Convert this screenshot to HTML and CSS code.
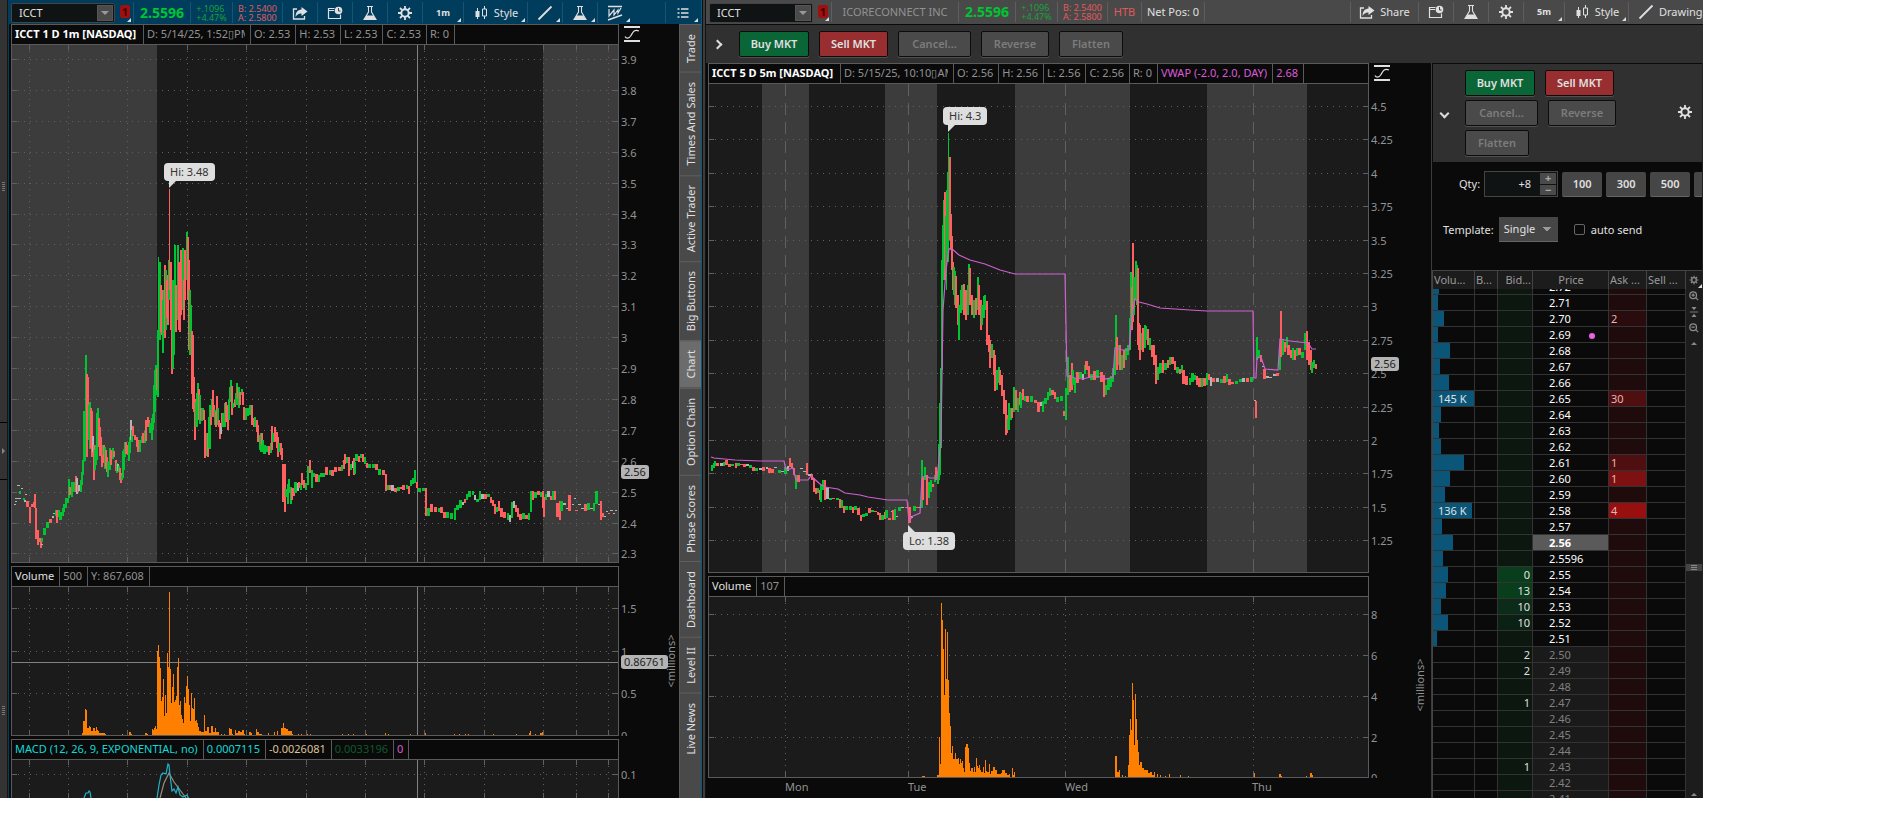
FILE: index.html
```html
<!DOCTYPE html>
<html lang="en">
<head>
  <meta charset="UTF-8">
  <meta name="viewport" content="width=device-width, initial-scale=1.0">
  <title>ICCT - Charts</title>
  <link rel="stylesheet" href="styles.css">
</head>
<body>
  <!-- Icon sprite -->
  <svg class="sprite" aria-hidden="true">
    <symbol id="i-share" viewBox="0 0 16 16"><path d="M5 4H1.5v10h11v-3" fill="none" stroke="currentColor" stroke-width="1.3"/><path d="M9.500 2l6 4.500-6 4.500V8.500C6.500 8.300 5 9.500 3.500 12 3.500 7.500 5.500 4.800 9.500 4.500z" fill="currentColor"/></symbol>
    <symbol id="i-clock" viewBox="0 0 16 16"><path d="M7 5.500H1.500M7.500 3.500h-6v10h12V9.500" fill="none" stroke="currentColor" stroke-width="1.2"/><circle cx="11.500" cy="5.500" r="3.800" fill="currentColor"/><path d="M11.500 3v3h2" fill="none" stroke="#345" stroke-width="1"/></symbol>
    <symbol id="i-flask" viewBox="0 0 16 16"><path d="M5 1.500h6M6.500 2v5L2 14.500h12L9.500 7V2" fill="none" stroke="currentColor" stroke-width="1.1"/><path d="M4.500 10.500h7l2.500 4.500H2z" fill="currentColor"/></symbol>
    <symbol id="i-gear" viewBox="0 0 16 16"><circle cx="8" cy="8" r="3.700" fill="none" stroke="currentColor" stroke-width="2"/><path d="M8 1v3M8 12v3M1 8h3M12 8h3M3 3l2.200 2.200M10.800 10.800L13 13M3 13l2.200-2.200M10.800 5.200L13 3" stroke="currentColor" stroke-width="1.800"/></symbol>
    <symbol id="i-candles" viewBox="0 0 16 16"><path d="M4.500 3v11M11.500 1v3M11.500 11v3" stroke="currentColor"/><path d="M2.500 6h4v6h-4z" fill="currentColor"/><path d="M9.500 4h4v7h-4z" fill="none" stroke="currentColor"/></symbol>
    <symbol id="i-line" viewBox="0 0 16 16"><path d="M1.500 14.500l13-13" stroke="currentColor" stroke-width="1.800"/></symbol>
    <symbol id="i-pattern" viewBox="0 0 16 16"><path d="M1 1.500h14M1 15l14-5" fill="none" stroke="currentColor" stroke-width="1.600"/><path d="M2 4v7l5-6v5l4-5v3l3-5" fill="none" stroke="currentColor" stroke-width="1.200"/></symbol>
    <symbol id="i-list" viewBox="0 0 16 16"><path d="M2.500 4h2M2.500 8h2M2.500 12h2M6 4h7.500M6 8h7.500M6 12h7.500" stroke="currentColor" stroke-width="1.400"/></symbol>
    <symbol id="i-fit" viewBox="0 0 16 16"><path d="M0 1h16M0 15h16" stroke="currentColor" stroke-width="2"/><path d="M1 10.500c1 2 4 2.500 6-1s3.500-6.500 8-4.500" fill="none" stroke="currentColor" stroke-width="1.200"/></symbol>
    <symbol id="i-zoomin" viewBox="0 0 12 12"><circle cx="5" cy="5" r="4" fill="none" stroke="currentColor" stroke-width="1.500"/><path d="M8 8l3 3M3 5h4M5 3v4" stroke="currentColor" stroke-width="1.500"/></symbol>
    <symbol id="i-zoomout" viewBox="0 0 12 12"><circle cx="5" cy="5" r="4" fill="none" stroke="currentColor" stroke-width="1.500"/><path d="M8 8l3 3M3 5h4" stroke="currentColor" stroke-width="1.500"/></symbol>
    <symbol id="i-center" viewBox="0 0 12 12"><path d="M1 6h10" stroke="currentColor"/><path d="M3 0h6L6 4zM3 12h6L6 8z" fill="currentColor"/></symbol>
  </svg>

  <main class="desktop">
    <aside class="rail">
      <span class="grip grip-top"></span>
      <span class="handle"></span>
      <span class="grip grip-bottom"></span>
    </aside>

    <!-- 1 minute chart -->
    <section class="window window-active">
      <div class="toolbar">
        <div class="symbol"><input type="text" value="ICCT" aria-label="Symbol"><button class="arrow" aria-label="Symbol list"></button></div>
        <button class="link-badge corner" aria-label="Link group"><span>1</span></button>
        <strong class="cell last">2.5596</strong>
        <span class="cell change">+.1096<br>+4.47%</span>
        <span class="cell quote">B: 2.5400<br>A: 2.5800</span>
        <button class="tool" aria-label="Share"><svg class="icon"><use href="#i-share"/></svg></button>
        <button class="tool" aria-label="Events"><svg class="icon"><use href="#i-clock"/></svg></button>
        <button class="tool" aria-label="Studies"><svg class="icon"><use href="#i-flask"/></svg></button>
        <button class="tool" aria-label="Settings"><svg class="icon"><use href="#i-gear"/></svg></button>
        <button class="tool tool-frame corner">1m</button>
        <button class="tool tool-style corner"><svg class="icon"><use href="#i-candles"/></svg>Style</button>
        <button class="tool corner" aria-label="Drawings"><svg class="icon"><use href="#i-line"/></svg></button>
        <button class="tool corner" aria-label="Edit studies"><svg class="icon"><use href="#i-flask"/></svg></button>
        <button class="tool tool-open corner" aria-label="Patterns"><svg class="icon"><use href="#i-pattern"/></svg></button>
        <span class="spacer spacer-line"></span>
        <button class="tool tool-open corner" aria-label="Menu"><svg class="icon"><use href="#i-list"/></svg></button>
      </div>
      <div class="window-body">
        <div class="charts charts-left">
          <div class="panel panel-price">
            <div class="frame">
              <div class="legend"><b>ICCT 1 D 1m [NASDAQ]</b><span class="date"><i>D: 5/14/25, 1:52▯PM</i></span><span>O: 2.53</span><span>H: 2.53</span><span>L: 2.53</span><span>C: 2.53</span><span>R: 0</span></div>
              <div class="plot" data-chart="leftPrice"></div>
            </div>
            <div class="axis"><svg class="icon fit"><use href="#i-fit"/></svg></div>
          </div>
          <div class="panel panel-volume">
            <div class="frame">
              <div class="legend"><span class="name">Volume</span><span>500</span><span>Y: 867,608</span></div>
              <div class="plot" data-chart="leftVolume"></div>
            </div>
            <div class="axis"><span class="units">&lt;millions&gt;</span></div>
          </div>
          <div class="panel panel-macd">
            <div class="frame">
              <div class="legend"><span class="cyan">MACD (12, 26, 9, EXPONENTIAL, no)</span><span class="cyan">0.0007115</span><span class="tan">-0.0026081</span><span class="forest">0.0033196</span><span class="violet">0</span></div>
              <div class="plot" data-chart="leftMacd"></div>
            </div>
            <div class="axis"></div>
          </div>
        </div>
        <nav class="tabs">
          <button>Trade</button>
          <button>Times And Sales</button>
          <button>Active Trader</button>
          <button>Big Buttons</button>
          <button class="active">Chart</button>
          <button>Option Chain</button>
          <button>Phase Scores</button>
          <button>Dashboard</button>
          <button>Level II</button>
          <button>Live News</button>
        </nav>
      </div>
    </section>

    <div class="splitter"></div>

    <!-- 5 minute chart -->
    <section class="window">
      <div class="toolbar">
        <div class="symbol"><input type="text" value="ICCT" aria-label="Symbol"><button class="arrow" aria-label="Symbol list"></button></div>
        <button class="link-badge corner" aria-label="Link group"><span>1</span></button>
        <span class="cell company">ICORECONNECT INC</span>
        <strong class="cell last">2.5596</strong>
        <span class="cell change">+.1096<br>+4.47%</span>
        <span class="cell quote">B: 2.5400<br>A: 2.5800</span>
        <span class="cell htb">HTB</span>
        <span class="cell netpos">Net Pos: 0</span>
        <span class="spacer spacer-line"></span>
        <button class="tool tool-share"><svg class="icon"><use href="#i-share"/></svg>Share</button>
        <button class="tool" aria-label="Events"><svg class="icon"><use href="#i-clock"/></svg></button>
        <button class="tool" aria-label="Studies"><svg class="icon"><use href="#i-flask"/></svg></button>
        <button class="tool" aria-label="Settings"><svg class="icon"><use href="#i-gear"/></svg></button>
        <button class="tool tool-frame corner">5m</button>
        <button class="tool tool-style corner"><svg class="icon"><use href="#i-candles"/></svg>Style</button>
        <button class="tool tool-drawings"><svg class="icon"><use href="#i-line"/></svg>Drawings</button>
      </div>
      <div class="orders">
        <button class="chevron chevron-right" aria-label="Expand"></button>
        <button class="order buy">Buy MKT</button>
        <button class="order sell">Sell MKT</button>
        <button class="order cancel" disabled>Cancel...</button>
        <button class="order reverse" disabled>Reverse</button>
        <button class="order flatten" disabled>Flatten</button>
      </div>
      <div class="window-body">
        <div class="charts charts-right">
          <div class="panel panel-price">
            <div class="frame">
              <div class="legend"><b>ICCT 5 D 5m [NASDAQ]</b><span class="date date-wide"><i>D: 5/15/25, 10:10▯AM</i></span><span>O: 2.56</span><span>H: 2.56</span><span>L: 2.56</span><span>C: 2.56</span><span>R: 0</span><span class="violet">VWAP (-2.0, 2.0, DAY)</span><span class="violet">2.68</span></div>
              <div class="plot" data-chart="rightPrice"></div>
            </div>
            <div class="axis"><svg class="icon fit"><use href="#i-fit"/></svg></div>
          </div>
          <div class="panel panel-volume">
            <div class="frame">
              <div class="legend"><span class="name">Volume</span><span>107</span></div>
              <div class="plot" data-chart="rightVolume"></div>
            </div>
            <div class="axis"><span class="units">&lt;millions&gt;</span></div>
          </div>
          <svg class="time-axis" data-days="Mon,Tue,Wed,Thu"></svg>
        </div>

        <aside class="trader">
          <div class="order-block">
            <button class="chevron chevron-down" aria-label="Collapse"></button>
            <div class="order-grid">
              <button class="order buy">Buy MKT</button>
              <button class="order sell">Sell MKT</button>
              <button class="order cancel" disabled>Cancel...</button>
              <button class="order reverse" disabled>Reverse</button>
              <button class="order flatten" disabled>Flatten</button>
            </div>
            <button class="gear" aria-label="Settings"><svg class="icon"><use href="#i-gear"/></svg></button>
          </div>
          <div class="qty-row">
            <label for="qty">Qty:</label>
            <div class="spinner">
              <input id="qty" type="text" value="+8">
              <span class="steps"><button aria-label="More">+</button><button aria-label="Less">−</button></span>
            </div>
            <button class="preset">100</button>
            <button class="preset">300</button>
            <button class="preset">500</button>
            <button class="preset" aria-label="More presets"></button>
          </div>
          <div class="template-row">
            <label for="template">Template:</label>
            <select id="template"><option>Single</option></select>
            <input id="autosend" type="checkbox">
            <label for="autosend">auto send</label>
          </div>
          <div class="ladder">
            <div class="ladder-main">
              <table class="ladder-head">
                <colgroup><col class="c-vol"><col class="c-buy"><col class="c-bid"><col class="c-price"><col class="c-ask"><col class="c-sell"></colgroup>
                <thead><tr><th>Volu...</th><th>B...</th><th class="right">Bid...</th><th class="center">Price</th><th>Ask ...</th><th>Sell ...</th></tr></thead>
              </table>
              <div class="ladder-scroll">
                <table class="ladder-body">
                  <colgroup><col class="c-vol"><col class="c-buy"><col class="c-bid"><col class="c-price"><col class="c-ask"><col class="c-sell"></colgroup>
                  <tbody></tbody>
                </table>
              </div>
            </div>
            <div class="ladder-tools">
              <span class="ladder-gear corner"><svg><use href="#i-gear"/></svg></span>
              <svg><use href="#i-zoomin"/></svg>
              <svg><use href="#i-center"/></svg>
              <svg><use href="#i-zoomout"/></svg>
              <span class="tri-up"></span>
              <span class="thumb"></span>
              <span class="tri-up tri-last"></span>
            </div>
          </div>
        </aside>
      </div>
    </section>
  </main>

  <script src="charts.js"></script>
</body>
</html>
```
FILE: styles.css
```css
:root {
  --bg: #0a0a0a;
  --plot: #1b1b1b;
  --line: #5a5a5a;
  --chrome: #303030;
  --control: #4a4a4a;
  --blue: #003c5c;
  --text: #e0e0e0;
  --dim: #929292;
  --green: #00c432;
  --red: #f0595b;
}

* {
  box-sizing: border-box;
}

body {
  margin: 0;
  padding: 0 175px 32px 0;
  height: 100vh;
  background: #fff;
  font: 11px/14px "Noto Sans", "Open Sans", sans-serif;
  color: var(--text);
}

button,
input,
select {
  margin: 0;
  padding: 0;
  border: 0;
  font: inherit;
  color: inherit;
  background: none;
}

.sprite {
  display: none;
}

.desktop {
  display: grid;
  grid-template-columns: 8px minmax(0, 694fr) 4px minmax(0, 997fr);
  height: 100%;
  overflow: hidden;
  background: var(--bg);
}

/* Left rail */
.rail {
  display: flex;
  flex-direction: column;
  background: #333;
  border-right: 1px solid #151515;
}

.grip {
  flex: 423;
  background: repeating-linear-gradient(#777 0 1px, transparent 1px 2px) center 44% / 3px 9px no-repeat;
}

.grip-bottom {
  flex: 319;
  background-position: center 73%;
}

.handle {
  flex: 56;
  border-top: 1px solid #000;
  border-bottom: 1px solid #000;
  display: flex;
  align-items: center;
}

.handle::before {
  content: "";
  margin-left: 2px;
  border: 3px solid transparent;
  border-left-color: #888;
  border-right: 0;
}

.splitter {
  border-left: 1px solid #111;
  border-right: 1px solid #111;
  background: #3c3c3c;
}

/* Windows */
.window {
  display: flex;
  flex-direction: column;
  min-width: 0;
  min-height: 0;
}

.window-active {
  border-left: 1px solid var(--blue);
  border-right: 1px solid #075680;
}

.window-body {
  flex: 1;
  display: flex;
  min-height: 0;
}

.toolbar {
  display: flex;
  align-items: stretch;
  height: 25px;
  padding: 2px 0 2px 3px;
  background: #494949;
  border-bottom: 1px solid #0a0a0a;
  overflow: hidden;
}

.window-active .toolbar {
  height: 24px;
  padding: 2px 0 1px 2px;
  background: var(--blue);
  border-bottom: 0;
}

.symbol {
  flex: none;
  display: flex;
  width: 104px;
  height: 20px;
  margin-top: 1px;
  padding: 1px;
  border: 1px solid #444;
  border-radius: 2px;
  background: #101313;
}

.symbol input {
  width: 84px;
  padding-left: 6px;
}

.arrow {
  width: 17px;
  background: #4a4a4a;
  border: 1px solid #555;
}

.arrow::before {
  content: "";
  display: block;
  width: 0;
  margin: auto;
  border: 4px solid transparent;
  border-top-color: #999;
  border-bottom: 0;
}

.link-badge {
  flex: none;
  display: flex;
  width: 19px;
  padding: 3px 0 0 5px;
  border-right: 1px solid #5e5e5e;
}

.link-badge span {
  width: 10px;
  height: 13px;
  border-radius: 2px;
  background: #a01010;
  color: #400;
  font-weight: 700;
  line-height: 13px;
}

.corner {
  position: relative;
}

.corner::after {
  content: "";
  position: absolute;
  right: 2px;
  bottom: 1px;
  border-left: 4px solid transparent;
  border-bottom: 4px solid #ddd;
}

.cell,
.tool {
  flex: none;
  display: flex;
  align-items: center;
  justify-content: center;
  border-right: 1px solid #5e5e5e;
  white-space: nowrap;
}

.window-active .cell,
.window-active .tool,
.window-active .spacer,
.window-active .link-badge {
  border-right-color: #155476;
}

.window-active .tool-open {
  border-right-color: transparent;
}

.last {
  width: 57px;
  color: var(--green);
  font-size: 14px;
}

.change {
  width: 42px;
  color: #17a33a;
  font-size: 9px;
  line-height: 9px;
}

.quote {
  width: 50px;
  color: #e05a5e;
  font-size: 9px;
  line-height: 9px;
}

.company {
  width: 127px;
  color: var(--dim);
}

.htb {
  width: 34px;
  color: #e05a5e;
}

.netpos {
  width: 63px;
}

.tool {
  width: 35px;
  gap: 5px;
}

.tool-frame {
  width: 41px;
  font-size: 9px;
  font-weight: 700;
}

.tool-style {
  width: 64px;
}

.tool-share {
  width: 68px;
}

/* Runs past the window edge */
.tool-drawings {
  width: 74px;
  padding-left: 9px;
  border-right: 0;
  justify-content: flex-start;
}

.spacer {
  flex: 1;
}

.spacer-line {
  border-right: 1px solid #5e5e5e;
}

.icon {
  flex: none;
  width: 16px;
  height: 16px;
}

/* Order buttons */
.orders {
  display: flex;
  align-items: center;
  gap: 10px;
  height: 38px;
  padding-left: 8px;
  background: var(--chrome);
}

.order {
  height: 26px;
  border: 1px solid #0c0c0c;
  border-radius: 2px;
  box-shadow: 0 1px 0 #505050;
  font-weight: 600;
}

.order:disabled {
  background: #4a4a4a;
  color: #7c7c7c;
}

.buy {
  width: 70px;
  background: #0a6637;
}

.sell {
  width: 69px;
  background: #992e30;
}

.cancel {
  width: 73px;
}

.reverse {
  width: 68px;
}

.flatten {
  width: 64px;
}

.chevron {
  display: flex;
  align-items: center;
  width: 15px;
  height: 20px;
}

.chevron::before {
  content: "";
  width: 5px;
  height: 5px;
  border: solid #ddd;
  border-width: 2px 2px 0 0;
  transform: rotate(45deg);
}

.chevron-down::before {
  transform: rotate(135deg);
}

/* Charts */
.charts {
  flex: 1;
  display: flex;
  flex-direction: column;
  gap: 3px;
  min-width: 0;
  padding-left: 2px;
}

.panel {
  display: flex;
  min-height: 0;
}

.charts-left .panel-price { flex: 539 1 0; }
.charts-left .panel-volume { flex: 170 1 0; }
.charts-left .panel-macd { flex: 59 1 0; }
.charts-right .panel-price { flex: 510 1 0; }
.charts-right .panel-volume { flex: 202 1 0; }

.frame {
  flex: 1;
  display: flex;
  flex-direction: column;
  min-width: 0;
  border: 1px solid var(--line);
}

.panel-macd .frame {
  border-bottom: 0;
}

.legend {
  display: flex;
  flex: none;
  height: 20px;
  border-bottom: 1px solid var(--line);
  color: var(--dim);
  line-height: 18px;
  white-space: nowrap;
  overflow: hidden;
}

.legend > * {
  padding: 0 5px 0 3px;
  border-right: 1px solid var(--line);
}

.legend b {
  width: 132px;
  color: #fff;
}

.legend i {
  display: block;
  overflow: hidden;
  font-style: normal;
}

.legend .date {
  width: 107px;
}

.legend .date-wide {
  width: 113px;
}

.legend .name { color: var(--text); }
.legend .cyan { color: #12d8d8; }
.legend .tan { color: #ddc39c; }
.legend .forest { color: #0d5a2a; }
.legend .violet { color: #dc5ad8; }

.plot {
  position: relative;
  flex: 1;
  min-height: 0;
  background: var(--plot);
}

.plot > svg {
  display: block;
  width: 100%;
  height: 100%;
}

.axis {
  position: relative;
  width: 60px;
  overflow: hidden;
}

.charts-right .axis {
  width: 62px;
}

.axis .labels {
  display: block;
  width: 100%;
  height: 100%;
  fill: var(--dim);
}

.fit {
  position: absolute;
  left: 5px;
  top: 2px;
}

.price-tag {
  position: absolute;
  left: 2px;
  padding: 0 3px;
  border-radius: 3px;
  background: #b4b4b4;
  color: #222;
  transform: translateY(-50%);
}

.callout {
  position: absolute;
  height: 18px;
  padding: 0 6px;
  border-radius: 4px;
  background: #dedede;
  color: #333;
  line-height: 18px;
  white-space: nowrap;
}

.callout::after {
  content: "";
  position: absolute;
  left: 5px;
  top: 18px;
  border-top: 7px solid #dedede;
  border-right: 7px solid transparent;
}

.callout-low::after {
  top: -7px;
  border-top: 0;
  border-bottom: 7px solid #dedede;
}

.units {
  position: absolute;
  right: 1px;
  top: 56%;
  color: var(--dim);
  writing-mode: vertical-rl;
  transform: rotate(180deg) translateY(50%);
}

.charts-right .units {
  right: 4px;
  top: 54%;
}

.time-axis {
  display: block;
  width: 100%;
  height: 20px;
  margin-top: -3px;
  fill: var(--dim);
}

/* Side tabs */
.tabs {
  flex: none;
  display: flex;
  flex-direction: column;
  width: 22px;
  background: #494949;
  border-left: 1px solid var(--line);
}

.tabs button {
  padding: 9px 0;
  border-bottom: 1px solid #606060;
  writing-mode: vertical-rl;
  transform: rotate(180deg);
  line-height: 20px;
  text-align: center;
}

.tabs .active {
  background: #6c6c6c;
}

/* Active trader */
.trader {
  flex: none;
  display: flex;
  flex-direction: column;
  width: 272px;
  border-left: 1px solid #3c3c3c;
  border-right: 1px solid #222;
  overflow: hidden;
}

.order-block {
  display: flex;
  align-items: center;
  height: 98px;
  margin: 1px 0 0 1px;
  padding: 0 9px 0 8px;
  background: var(--chrome);
}

.order-block .chevron {
  width: 24px;
}

.order-grid {
  flex: 1;
  display: flex;
  flex-wrap: wrap;
  gap: 4px 10px;
}

.qty-row,
.template-row {
  display: flex;
  align-items: center;
}

.qty-row {
  gap: 4px;
  margin-top: 9px;
  padding-left: 27px;
}

.spinner {
  flex: none;
  display: flex;
  width: 74px;
  height: 26px;
  border: 1px solid #444;
  background: #101313;
}

.spinner input {
  flex: 1;
  width: 20px;
  padding-right: 9px;
  text-align: right;
}

.steps {
  display: grid;
  width: 17px;
  gap: 1px;
  padding: 1px 1px 1px 0;
}

.steps button {
  background: #4a4a4a;
  color: #aaa;
  line-height: 8px;
  font-weight: 700;
}

.preset {
  flex: none;
  width: 40px;
  height: 25px;
  border-radius: 2px;
  border-bottom: 1px solid #666;
  background: #464646;
  font-weight: 600;
}

.template-row {
  margin-top: 20px;
  padding-left: 11px;
}

.template-row select {
  width: 59px;
  height: 25px;
  margin: 0 16px 0 5px;
  padding: 0 5px;
  border-bottom: 1px solid #666;
  appearance: none;
  background: conic-gradient(from -45deg at 50% 100%, #999 90deg, transparent 0) 44px 10px / 8px 4px no-repeat, #464646;
}

.template-row input {
  appearance: none;
  width: 11px;
  height: 11px;
  margin-right: 6px;
  border: 1px solid #666;
  border-radius: 2px;
}

/* Price ladder */
.ladder {
  flex: 1;
  display: flex;
  min-height: 0;
  margin-top: 28px;
  border-top: 1px solid #444;
  border-left: 1px solid #444;
}

.ladder-main {
  flex: 1;
  display: flex;
  flex-direction: column;
  min-width: 0;
}

.ladder table {
  width: 100%;
  table-layout: fixed;
  border-collapse: separate;
  border-spacing: 0;
}

.c-vol { width: 42px; }
.c-buy { width: 23px; }
.c-bid { width: 35px; }
.c-price { width: 76px; }
.c-ask { width: 38px; }

.ladder th {
  height: 18px;
  padding: 0 0 0 1px;
  border-right: 1px solid #444;
  background: #1c1c1c;
  color: #999;
  font-weight: 400;
  text-align: left;
  white-space: nowrap;
  overflow: hidden;
}

.ladder th.right { padding-right: 1px; text-align: right; }
.ladder th.center { text-align: center; }

.ladder-scroll {
  flex: 1;
  min-height: 0;
  overflow: hidden;
}

.ladder-body {
  margin-top: -10px;
}

.ladder td {
  height: 16px;
  padding: 0;
  border-right: 1px solid #333;
  border-bottom: 1px solid #333;
  line-height: 15px;
}

.ladder td:nth-child(3) {
  padding-right: 2px;
  background: #0b170f;
  text-align: right;
}

.ladder td:nth-child(4) { padding-left: 16px; color: #fff; }
.ladder td:nth-child(5) { padding-left: 2px; background: #200b0c; color: #e0b8b0; }
.ladder tr.out td:nth-child(4) { background: #1a1a1a; color: #808080; }
.ladder tr.current td:nth-child(4) { background: #5a5a5a; font-weight: 700; }

.ladder td.bid-1:nth-child(3) { background: #0a3d1c; }
.ladder td.bid-2:nth-child(3) { background: #0c2b19; }
.ladder td.bid-3:nth-child(3) { background: #0b2114; }
.ladder td.ask-1:nth-child(5) { background: #2a0c0e; }
.ladder td.ask-2:nth-child(5) { background: #4f0f10; }
.ladder td.ask-3:nth-child(5) { background: #7d1112; }
.ladder td.ask-4:nth-child(5) { background: #980f10; }

.bar {
  height: 15px;
  padding-left: 5px;
  background: #0a5578;
  white-space: nowrap;
}

.bar:empty {
  padding: 0;
}

.dot {
  display: inline-block;
  width: 6px;
  height: 6px;
  margin-left: 18px;
  border-radius: 3px;
  background: #ea62e0;
}

.ladder-tools {
  flex: none;
  display: flex;
  flex-direction: column;
  align-items: center;
  gap: 6px;
  width: 16px;
  padding-top: 4px;
  background: #1c1c1c;
  color: #8c8c8c;
}

.ladder-tools svg {
  display: block;
  flex: none;
  width: 10px;
  height: 10px;
}

.ladder-gear {
  padding: 0 3px;
}

.ladder-gear::after {
  right: 0;
  bottom: -3px;
}

.tri-up {
  border: 3px solid transparent;
  border-bottom-color: #888;
  border-top: 0;
  margin-top: 3px;
}

.thumb {
  width: 16px;
  height: 7px;
  margin: auto 0;
  background: repeating-linear-gradient(#888 0 1px, #444 1px 2px) center / 6px 5px no-repeat, #444;
}

.tri-last {
  margin-bottom: 2px;
}
```
FILE: charts.js
```javascript
// Candles: x top bottom colour (g up, r down, w unchanged), in canvas units
const leftCandles = `17 485 486 w;21 488 489 w;19 491 494 g;15 501 502 w;14 504 505 w;15 498 499 w;18 498 499 w;25 494 495 w;23 498 500 g;24 500 502 w;
26 501 507 r;29 507 523 r;31 504 507 r;33 502 507 r;34 494 508 r;35 508 539 r;37 530 545 r;38 538 542 r;40 538 548 r;41 538 542 g;41 544 545 w;43 528 535 g;46 522 528 g;49 519 523 r;52 516 518 w;53 513 514 w;55 510 516 g;56 510 523 r;58 510 517 g;59 512 520 g;62 508 516 g;63 504 512 g;65 498 508 g;67 498 503 g;68 479 498 g;69 487 495 r;71 482 497 g;73 482 492 g;75 476 492 r;76 478 494 w;77 485 492 r;78 485 491 w;80 480 492 g;81 472 485 g;82 460 475 g;83 411 461 g;84 411 461 g;85 355 431 g;86 374 457 r;87 377 413 r;88 405 440 g;89 402 449 g;90 408 448 r;91 411 457 r;92 436 452 w;93 445 480 r;94 450 470 g;95 445 465 g;96 413 460 g;97 408 445 g;98 418 447 r;99 427 456 r;100 437 455 r;101 445 467 r;102 445 455 g;103 445 463 r;104 447 469 g;105 450 468 r;106 457 472 r;107 462 477 g;109 448 470 g;110 450 465 r;112 448 459 g;113 451 457 r;115 460 471 r;116 463 473 g;117 464 471 w;118 466 472 g;119 468 480 r;120 473 483 r;121 475 480 g;122 451 478 g;123 449 470 g;124 442 457 g;125 442 454 r;127 445 455 r;128 442 461 g;129 437 453 g;130 420 440 w;131 430 442 g;132 426 436 r;134 435 440 r;136 437 447 r;137 440 452 r;139 440 452 g;141 436 443 g;142 433 443 r;144 431 443 g;145 420 441 r;147 417 427 r;148 420 427 r;149 423 433 g;151 418 440 g;152 414 430 g;153 385 423 g;154 370 412 g;155 365 395 g;156 368 390 r;157 330 397 g;158 257 380 g;159 262 340 g;160 285 332 r;161 290 335 r;162 300 353 g;163 290 335 g;164 265 338 r;165 270 330 g;166 280 318 r;167 275 325 r;168 260 300 g;169 189 290 r;170 262 330 r;171 285 374 r;172 280 369 g;173 300 355 g;174 245 310 g;175 285 332 r;177 245 320 g;178 262 330 r;179 265 332 r;180 250 315 r;182 248 310 g;183 280 320 r;184 250 300 r;186 232 280 g;187 237 300 r;188 260 350 r;189 290 355 g;190 305 343 g;191 331 394 r;192 335 409 r;193 377 412 r;194 399 440 r;195 402 427 g;196 393 427 g;197 383 410 g;198 389 420 r;199 395 424 g;200 408 420 r;201 408 421 g;202 408 420 g;203 410 420 r;204 420 458 r;206 433 456 g;207 433 457 r;208 417 448 g;209 405 449 g;210 410 425 r;211 399 417 g;212 390 417 r;213 405 416 r;214 410 425 g;215 412 427 r;216 396 418 r;217 408 425 g;218 420 427 r;219 425 439 r;220 423 434 w;221 413 427 r;222 413 427 g;224 403 427 g;225 402 422 r;227 405 430 r;228 400 420 g;229 387 402 g;230 380 395 g;231 386 415 r;232 403 408 g;234 400 407 r;235 393 405 g;236 383 405 g;237 387 398 r;238 387 408 g;239 392 405 r;241 389 395 g;242 392 405 r;243 407 420 r;245 408 420 g;247 408 416 g;249 405 415 g;251 405 425 r;253 418 427 r;254 417 427 g;256 420 432 r;257 425 442 r;259 435 450 g;260 433 452 g;261 433 445 r;262 440 452 g;263 445 454 g;266 446 452 g;268 446 455 r;270 443 453 g;271 426 450 r;272 433 442 g;274 427 442 r;276 432 448 r;277 437 457 r;278 443 452 g;280 443 455 r;281 448 460 r;282 464 502 r;284 464 512 r;285 489 497 g;287 484 504 g;288 479 493 g;290 487 504 g;291 488 500 r;293 488 496 r;294 482 493 g;297 483 491 w;298 482 488 r;300 483 490 g;301 473 485 r;303 480 488 r;305 483 490 g;307 466 485 g;309 460 473 r;311 470 488 g;313 473 477 g;315 474 482 r;318 475 482 g;320 473 477 g;323 473 477 g;325 467 475 r;329 470 475 g;331 470 476 r;334 467 472 r;338 467 471 r;341 465 471 g;343 460 469 r;344 454 464 r;346 457 463 g;348 457 476 r;350 464 470 g;352 461 468 w;353 458 475 r;354 462 474 g;355 454 461 g;358 456 462 r;360 454 458 g;362 454 462 r;364 457 464 g;366 463 468 r;368 464 468 g;372 464 468 g;375 464 470 r;378 469 475 g;382 470 475 r;385 474 491 r;387 485 490 g;389 485 490 r;391 485 491 w;394 488 492 r;397 487 491 g;400 487 489 r;402 485 490 r;406 485 489 g;408 486 494 r;410 480 486 g;412 478 484 g;414 470 483 g;416 482 488 r;418 488 492 g;422 488 491 g;425 488 516 r;427 508 516 g;430 504 512 r;434 507 512 r;438 508 512 g;440 507 513 r;443 512 518 r;446 512 518 g;450 513 519 g;454 508 520 g;456 505 510 g;459 500 508 g;462 502 505 w;464 499 503 r;466 494 500 g;468 491 497 g;472 491 495 g;474 495 500 w;476 499 502 g;479 491 500 g;481 494 499 w;484 494 499 r;487 494 497 g;490 497 503 r;492 500 506 r;494 504 514 r;496 507 512 g;498 501 511 r;500 508 517 r;503 512 518 r;507 513 520 g;509 515 522 w;511 502 518 g;513 501 508 w;515 505 512 r;517 508 517 r;519 514 520 r;522 513 519 g;525 515 519 r;528 513 520 g;530 491 512 g;532 491 500 r;534 492 498 g;537 491 495 r;540 492 497 g;542 491 508 r;543 497 517 r;545 494 500 g;547 491 497 w;550 496 500 r;552 491 500 g;554 491 500 r;556 503 517 r;559 501 520 r;560 501 511 g;563 503 505 w;566 508 509 w;568 495 511 r;572 504 505 w;574 498 499 w;575 510 511 r;578 504 505 w;581 508 509 w;584 504 511 r;587 503 510 g;590 508 509 w;593 503 511 g;595 491 504 g;598 504 505 w;600 501 520 r;602 513 517 r;604 516 517 w;606 511 512 w;608 513 514 r;610 510 511 w;613 513 514 w;615 510 511 w`;

const rightCandles = `711 465 471 g;713 463 468 g;714 461 466 g;716 463 466 r;720 463 466 w;723 462 466 g;725 460 465 r;728 464 467 r;731 464 466 g;735 463 468 r;737 463 466 g;740 464 465 r;743 464 467 r;746 464 466 w;749 465 468 g;752 467 471 r;755 468 471 g;759 468 470 w;762 467 471 r;766 467 469 w;768 468 473 r;771 469 473 r;774 467 468 w;778 470 473 g;781 471 472 w;784 467 474 g;787 466 471 w;789 458 467 r;791 463 468 r;793 468 475 r;795 475 489 g;797 475 482 r;800 468 469 w;803 471 472 w;806 463 475 r;808 474 476 w;811 474 480 r;813 478 492 r;815 488 494 r;817 488 493 g;819 490 500 r;820 485 502 g;822 480 490 g;824 480 500 r;826 487 499 w;829 498 500 g;832 498 499 r;836 498 500 g;839 499 508 r;841 500 508 g;843 506 513 r;845 506 510 g;849 506 510 g;852 507 513 r;854 506 510 g;857 508 515 r;860 515 521 r;862 514 517 g;865 513 516 g;868 508 513 r;871 510 512 g;874 511 512 r;877 512 515 r;879 513 520 r;881 515 520 g;884 512 519 r;885 510 518 g;888 518 520 r;891 511 512 w;892 510 520 r;894 509 520 g;896 516 517 w;898 507 511 g;901 507 508 w;905 507 508 r;908 507 523 r;911 516 518 w;913 506 511 g;916 507 508 r;919 507 508 w;921 460 508 g;922 477 500 r;924 467 480 g;926 475 505 r;928 482 498 g;930 480 492 g;932 484 487 r;934 475 482 g;935 467 480 r;937 472 484 g;938 444 480 g;939 403 475 g;940 368 460 g;941 260 448 g;942 225 370 g;943 200 280 g;944 192 280 r;945 216 280 g;946 190 290 g;947 172 262 g;948 133 250 g;949 157 240 r;950 214 250 r;951 236 270 r;952 262 290 r;953 267 295 g;954 271 305 g;955 276 308 r;957 295 325 r;958 305 340 g;960 290 313 g;961 285 310 g;963 284 315 r;965 290 320 r;967 285 315 g;968 264 300 g;969 268 305 r;971 295 315 r;973 300 318 g;975 298 315 r;977 277 310 g;978 285 315 r;980 300 330 r;981 305 325 g;983 296 318 g;984 295 310 g;986 301 345 r;988 335 352 r;989 340 368 r;991 344 358 g;993 350 375 r;994 355 391 r;996 370 390 g;998 367 383 g;999 370 385 r;1001 375 396 r;1003 390 414 r;1005 400 435 r;1006 415 433 r;1007 419 430 g;1008 403 430 g;1010 408 420 g;1011 408 418 r;1013 387 412 g;1015 390 410 r;1017 398 412 g;1019 392 405 r;1020 393 408 g;1022 389 400 r;1024 396 401 g;1026 396 402 r;1030 396 402 g;1034 400 403 r;1037 402 412 r;1040 402 406 w;1042 401 412 g;1044 398 404 g;1047 392 400 g;1049 388 396 g;1051 390 395 r;1054 392 399 r;1056 397 402 g;1060 396 401 g;1063 411 416 r;1065 388 420 g;1067 357 395 g;1069 375 392 r;1071 363 390 r;1072 370 385 g;1074 378 393 g;1076 372 383 r;1079 372 378 g;1082 374 380 w;1084 365 374 g;1085 361 370 r;1088 366 378 r;1090 374 380 g;1093 371 380 r;1096 370 378 g;1100 372 382 r;1103 375 397 r;1105 385 395 g;1107 378 390 g;1110 376 387 g;1112 368 382 g;1114 350 375 g;1115 315 360 g;1116 337 370 r;1118 345 365 g;1119 345 370 r;1121 355 370 g;1123 350 368 r;1125 348 360 g;1127 345 355 g;1129 318 350 g;1130 272 325 g;1131 287 330 r;1132 243 322 r;1133 277 315 g;1135 261 300 g;1136 265 305 g;1137 268 345 r;1138 323 350 r;1139 325 360 r;1141 333 350 g;1142 328 352 r;1144 325 348 g;1145 326 340 g;1147 329 345 r;1149 338 350 g;1151 345 357 r;1153 345 365 r;1155 355 384 r;1157 367 380 g;1159 363 373 g;1162 360 373 r;1164 363 370 g;1167 360 368 r;1169 357 365 g;1171 357 364 r;1174 361 370 r;1176 367 373 g;1179 369 374 r;1181 365 373 g;1182 370 384 r;1185 376 385 r;1189 378 385 g;1191 373 382 g;1194 375 380 g;1196 376 385 r;1198 378 387 r;1201 378 387 g;1203 378 386 r;1206 373 385 g;1208 374 380 r;1210 377 386 w;1212 378 382 r;1216 378 382 w;1220 379 383 g;1223 376 383 r;1226 374 382 g;1228 379 385 r;1231 382 384 r;1235 381 384 g;1239 379 382 g;1242 378 382 w;1246 378 382 r;1250 377 382 g;1254 400 401 w;1255 401 418 r;1256 337 360 g;1258 350 357 g;1260 355 362 r;1262 366 367 w;1263 369 379 r;1266 376 378 w;1269 377 378 w;1273 374 376 w;1276 373 376 r;1279 345 370 g;1280 311 357 r;1282 340 355 g;1284 342 352 r;1286 337 348 g;1287 345 355 r;1290 350 358 r;1292 348 360 g;1294 350 360 r;1296 348 356 g;1298 348 355 r;1301 352 358 g;1304 333 350 g;1306 331 360 r;1308 342 365 r;1310 350 370 r;1311 362 373 g;1313 360 368 g;1315 364 369 r`;

const vwap = '711 457 714 458 735 460 760 461 784 461 786 470 793 468 796 480 808 480 811 476 820 484 825 487 838 489 845 493 860 495 868 497 888 500 907 500 909 521 913 516 920 513 922 478 925 476 930 478 937 478 941 440 943 310 946 270 949 249 951 248 959 255 970 260 985 264 1000 270 1015 274 1065 274 1067 376 1075 378 1083 379 1094 376 1102 377 1106 379 1113 377 1115 348 1122 350 1129 350 1132 315 1135 299 1139 302 1147 304 1160 308 1190 310 1207 311 1253 311 1254 378 1256 378 1257 358 1261 357 1265 369 1278 370 1280 339 1290 341 1308 343 1312 349 1316 349';

// Volume bars: x top
const leftBars = '82 733 83 721 85 709 86 710 87 728 89 726 90 727 91 731 93 728 95 731 96 727 97 730 98 731 99 733 101 733 103 733 105 734 122 734 129 732 131 734 145 733 147 734 152 729 153 730 154 728 155 726 156 729 157 651 158 645 159 657 160 668 161 701 162 697 163 679 164 716 165 695 166 713 167 653 168 667 169 592 170 669 171 703 172 687 173 674 174 702 175 700 176 696 177 667 178 658 179 705 180 701 181 715 182 719 183 723 184 697 185 703 186 686 187 676 188 689 189 705 190 721 191 693 192 708 193 709 194 698 195 721 196 720 197 723 198 727 199 731 201 732 202 732 204 715 205 731 207 727 208 727 209 733 211 726 212 726 213 732 215 728 216 732 218 732 221 734 224 734 229 728 230 729 232 734 235 730 236 733 238 731 240 732 242 730 244 734 249 732 251 733 256 729 257 732 259 734 261 734 268 733 274 732 277 731 281 728 283 723 284 728 286 729 288 731 290 731 292 734 298 734 301 734 307 734 310 734 342 734 348 734 353 734 366 734 385 733 388 734 410 734 425 733 454 734 459 734 465 734 468 734 493 734 516 734 529 733 530 731 535 734 540 733 542 732';
const rightBars = '922 776 924 776 937 775 939 737 940 764 941 603 942 620 943 649 944 695 945 629 946 679 947 632 948 680 949 713 950 726 951 753 952 746 953 759 955 753 956 759 957 759 958 758 959 764 960 759 961 763 962 761 963 768 964 772 965 747 966 744 967 744 968 748 969 763 970 771 971 768 973 772 974 767 975 772 976 758 977 766 978 768 979 765 980 770 981 772 983 767 984 773 985 760 986 771 987 772 989 764 990 774 991 771 993 767 995 770 997 774 999 774 1001 773 1002 770 1003 770 1005 773 1007 775 1009 774 1012 768 1013 775 1014 772 1115 756 1117 772 1119 770 1122 775 1125 776 1128 765 1129 735 1130 719 1131 730 1132 683 1133 700 1134 745 1135 694 1136 719 1137 740 1138 752 1139 765 1140 762 1142 768 1144 770 1146 770 1148 773 1150 772 1152 775 1154 772 1157 774 1160 775 1165 776 1169 774 1180 775 1188 776 1254 773 1279 774 1281 776 1306 776 1310 773 1312 775';

const leftGrid = [29, 68, 127, 187, 246, 306, 365, 424, 484, 543, 576, 608];

// box: x, y, width, height of the plot in canvas units; axis: top and height of its panel
const charts = {
  leftPrice: {
    box: [12, 45, 606, 517], axis: [24, 539],
    bands: [[12, 157], [543, 618]], vertical: leftGrid, crossX: 417,
    ticks: range(3.9, -0.1, 17, 59, 30.9, 1), candles: leftCandles,
    tag: ['2.56', 472], callouts: [['Hi: 3.48', 164, 163]],
  },
  leftVolume: {
    box: [12, 587, 606, 148], axis: [566, 170],
    vertical: leftGrid, crossX: 417, crossY: 662,
    ticks: [['1.5', 608], ['1', 651], ['0.5', 693], ['0', 735]], bars: leftBars, tag: ['0.86761', 662],
  },
  leftMacd: {
    box: [12, 760, 606, 38], axis: [739, 59],
    vertical: leftGrid, crossX: 417, ticks: [['0.1', 774]],
    lines: [['#9c8c78', '160 798 164 783 169 773 174 782 180 790 186 798'],
      ['#1fb5cc', '84 798 86 793 88 793 89 791 90 792 91 798'],
      ['#1fb5cc', '157 798 159 785 161 775 163 773 166 774 168 764 169 765 170 775 172 791 174 789 176 793 178 787 180 795 183 797 187 795 189 799']],
  },
  rightPrice: {
    box: [709, 84, 659, 488], axis: [63, 510],
    bands: [[762, 809], [885, 937], [1015, 1130], [1207, 1307]],
    vertical: [785, 908, 1065, 1253], dash: '12 7',
    ticks: range(4.5, -0.25, 14, 106, 33.4, 2), candles: rightCandles,
    lines: [['#d060cf', vwap]],
    tag: ['2.56', 364], callouts: [['Hi: 4.3', 943, 107], ['Lo: 1.38', 903, 532, 'low']],
  },
  rightVolume: {
    box: [709, 597, 659, 180], axis: [576, 202],
    vertical: [785, 908, 1065, 1253],
    ticks: [['8', 614], ['6', 655], ['4', 696], ['2', 737], ['0', 777]], bars: rightBars,
  },
};

const colours = { g: '#00c432', r: '#ff5f5f', w: '#b4b4b4' };

function range(start, step, count, y, dy, digits) {
  return Array.from({ length: count }, (_, i) => [
    String(Number((start + i * step).toFixed(digits))), Math.round(y + i * dy),
  ]);
}

function pairs(text) {
  const n = text.split(' ').map(Number);
  return n.filter((_, i) => i % 2 === 0).map((x, i) => [x, n[i * 2 + 1]]);
}

function drawChart(el, c) {
  const [x, y, w, h] = c.box;
  const right = x + w;
  const bottom = y + h;
  let s = '';

  (c.bands || []).forEach(([a, b]) => {
    s += `<rect x="${a}" y="${y}" width="${b - a}" height="${h}" fill="#3c3c3c"/>`;
  });
  c.ticks.forEach(([, ty]) => {
    const py = ty + 0.5;
    s += `<path d="M${x} ${py}H${right}" stroke="#606060" stroke-dasharray="1 5"/>`;
    s += `<path d="M${x} ${py}h5M${right - 5} ${py}h5" stroke="#606060"/>`;
  });
  c.vertical.forEach((vx) => {
    const px = vx + 0.5;
    s += `<path d="M${px} ${y}V${bottom}" stroke="#606060" stroke-dasharray="${c.dash || '1 5'}"/>`;
    s += `<path d="M${px} ${y}v5M${px} ${bottom - 5}v5" stroke="#606060"/>`;
  });
  if (c.crossX) s += `<path d="M${c.crossX + 0.5} ${y}V${bottom}" stroke="#808080"/>`;
  if (c.crossY) s += `<path d="M${x} ${c.crossY + 0.5}H${right}" stroke="#808080"/>`;

  if (c.candles) {
    const list = c.candles.split(';').map((t) => t.trim().split(' '));
    list.forEach(([cx, top, low, k], i) => {
      const next = list[i + 1] ? list[i + 1][0] - cx : 2;
      // long wicks stay one unit wide
      const least = low - top > 90 ? 1 : 2;
      const cw = Math.min(Math.max(next, least), 3);
      s += `<rect x="${cx}" y="${top}" width="${cw}" height="${low - top}" fill="${colours[k]}"/>`;
    });
  }
  if (c.bars) {
    pairs(c.bars).forEach(([bx, top], i, all) => {
      const bw = all[i + 1] && all[i + 1][0] - bx === 2 ? 2 : 1;
      s += `<rect x="${bx}" y="${top}" width="${bw}" height="${bottom - top}" fill="#ff8000"/>`;
    });
  }
  (c.lines || []).forEach(([colour, points]) => {
    s += `<polyline points="${points}" fill="none" stroke="${colour}" stroke-width="1.2" shape-rendering="auto"/>`;
  });

  el.innerHTML = `<svg viewBox="${x} ${y} ${w} ${h}" preserveAspectRatio="none" shape-rendering="crispEdges">${s}</svg>`;

  (c.callouts || []).forEach(([text, cx, cy, kind]) => {
    el.insertAdjacentHTML('beforeend',
      `<span class="callout ${kind ? 'callout-low' : ''}" style="left:${(cx - x) / w * 100}%;top:${(cy - y) / h * 100}%">${text}</span>`);
  });

  // Axis labels keep their size, only their place follows the panel height
  const axis = el.closest('.panel').querySelector('.axis');
  const [top, height] = c.axis;
  const labels = c.ticks.map(([text, ty]) =>
    `<text x="2" y="${(ty - top + 5) / height * 100}%">${text}</text>`).join('');
  axis.insertAdjacentHTML('afterbegin', `<svg class="labels">${labels}</svg>`);
  if (c.tag) {
    axis.insertAdjacentHTML('beforeend',
      `<span class="price-tag" style="top:${(c.tag[1] - top) / height * 100}%">${c.tag[0]}</span>`);
  }
}

document.querySelectorAll('[data-chart]').forEach((el) => drawChart(el, charts[el.dataset.chart]));

// Day labels under the 5 minute chart
const days = document.querySelector('.time-axis');
days.innerHTML = days.dataset.days.split(',').map((day, i) =>
  `<text x="${([785, 908, 1065, 1252][i] - 708) / 723 * 100}%" y="13">${day}</text>`).join('');

// Ladder: price, volume bar, label, bid, bid class, ask, ask class
const ladder = [
  ['2.72', 6], ['2.71', 5], ['2.70', 11, '', '', '', '2', 'ask-1'], ['2.69', 5], ['2.68', 17], ['2.67', 7],
  ['2.66', 16], ['2.65', 41, '145 K', '', '', '30', 'ask-2'], ['2.64', 8], ['2.63', 6], ['2.62', 8],
  ['2.61', 31, '', '', '', '1', 'ask-2'], ['2.60', 17, '', '', '', '1', 'ask-3'], ['2.59', 12],
  ['2.58', 39, '136 K', '', '', '4', 'ask-4'], ['2.57', 9], ['2.56', 20], ['2.5596', 10],
  ['2.55', 15, '', '0', 'bid-1'], ['2.54', 13, '', '13', 'bid-1'], ['2.53', 8, '', '10', 'bid-2'],
  ['2.52', 15, '', '10', 'bid-3'], ['2.51', 4], ['2.50', 0, '', '2'], ['2.49', 0, '', '2'], ['2.48', 0],
  ['2.47', 0, '', '1'], ['2.46', 0], ['2.45', 0], ['2.44', 0], ['2.43', 0, '', '1'], ['2.42', 0], ['2.41', 0],
];

document.querySelector('.ladder-body tbody').innerHTML = ladder.map(
  ([price, vol, label = '', bid = '', bidClass = '', ask = '', askClass = '']) => {
    const row = price === '2.56' ? 'current' : Number(price) <= 2.5 ? 'out' : '';
    const dot = price === '2.69' ? '<span class="dot"></span>' : '';
    return `<tr class="${row}"><td><div class="bar" style="width:${vol}px">${label}</div></td><td></td>` +
      `<td class="${bidClass}">${bid}</td><td>${price}${dot}</td><td class="${askClass}">${ask}</td><td></td></tr>`;
  }).join('');
```
